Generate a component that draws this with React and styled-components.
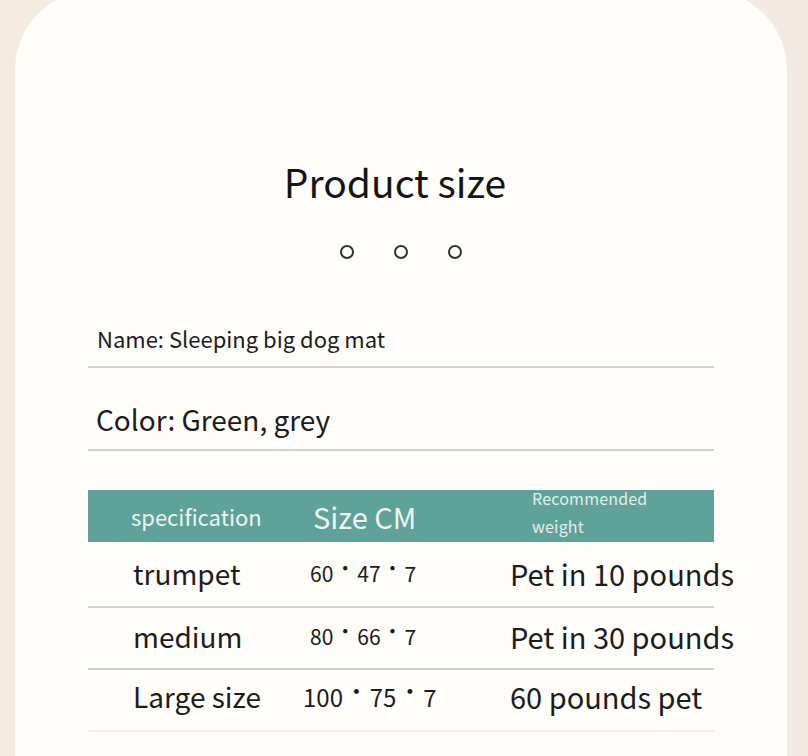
import styled, { createGlobalStyle } from "styled-components";

const GlobalStyle = createGlobalStyle`
  *, *::before, *::after {
    box-sizing: border-box;
  }
  html, body {
    margin: 0;
    padding: 0;
    background: #f6ede3;
    overflow: hidden;
  }
  body {
    font-family: "Noto Sans CJK SC", "Noto Sans", sans-serif;
    color: #1c1c1c;
  }
`;

const Page = styled.div`
  width: 808px;
  height: 756px;
  overflow: hidden;
  background: linear-gradient(90deg, #f6ebdf 0%, #f8efe6 50%, #f3e9e2 100%);
`;

const Card = styled.div`
  margin: -10px 21px 0 15px;
  height: 790px;
  background: #fefdf9;
  border-radius: 80px 80px 0 0;
  display: flex;
  flex-direction: column;
  align-items: center;
`;

const Title = styled.h1`
  margin: 172px 0 0 -12px;
  font-size: 39px;
  line-height: 1;
  font-weight: 400;
  color: #151515;
`;

const Dots = styled.div`
  display: flex;
  gap: 40px;
  margin-top: 44px;
`;

const Ring = styled.span`
  width: 14px;
  height: 14px;
  border: 2px solid #333;
  border-radius: 50%;
`;

const Content = styled.div`
  width: 626px;
  margin-top: 51px;
  display: flex;
  flex-direction: column;
`;

const InfoLine = styled.div`
  padding-left: ${(p) => p.$indent}px;
  padding-top: ${(p) => p.$drop}px;
  height: ${(p) => p.$height}px;
  display: flex;
  align-items: center;
  font-size: ${(p) => p.$size}px;
  border-bottom: 2px solid #cfd0cf;
`;

const Table = styled.div`
  margin-top: 39px;
  display: grid;
  grid-template-columns: 215px 204px minmax(0, 1fr);
`;

const HeadCell = styled.div`
  background: #5fa29a;
  height: 52px;
  display: flex;
  align-items: center;
  padding-left: ${(p) => p.$pad}px;
  color: #eef5f2;
  font-size: ${(p) => p.$size}px;
`;

const Stacked = styled.div`
  display: flex;
  flex-direction: column;
  gap: 10px;
  font-size: 16px;
  line-height: 1.1;
  letter-spacing: 0.2px;
  margin-top: -6px;
  opacity: 0.92;
`;

const Row = styled.div`
  display: contents;
`;

const Cell = styled.div`
  height: ${(p) => p.$height}px;
  display: flex;
  align-items: center;
  padding-left: ${(p) => p.$pad}px;
  padding-bottom: ${(p) => p.$lift}px;
  font-size: ${(p) => p.$size}px;
  white-space: nowrap;
  overflow: visible;
  border-bottom: 2px solid ${(p) => (p.$last ? "#efeeea" : "#cfd0cf")};
`;

const Dot = styled.span`
  font-size: 0.95em;
  margin: 0 2px;
  position: relative;
  top: -0.3em;
`;

const rows = [
  { name: "trumpet", size: ["60", "47", "7"], weight: "Pet in 10 pounds", h: 66, nsize: 21, npad: 7, lift: 2 },
  { name: "medium", size: ["80", "66", "7"], weight: "Pet in 30 pounds", h: 62, nsize: 21, npad: 7, lift: 4 },
  { name: "Large size", size: ["100", "75", "7"], weight: "60 pounds pet", h: 62, nsize: 24, npad: 0, lift: 8 },
];

const Size = ({ parts }) =>
  parts.map((p, i) => (
    <span key={i}>
      {p}
      {i < parts.length - 1 && <Dot>•</Dot>}
    </span>
  ));

export default function App() {
  return (
    <Page>
      <GlobalStyle />
      <Card>
        <Title>Product size</Title>
        <Dots>
          <Ring />
          <Ring />
          <Ring />
        </Dots>
        <Content>
          <InfoLine $indent={9} $drop={0} $height={58} $size={22}>
            Name: Sleeping big dog mat
          </InfoLine>
          <InfoLine $indent={8} $drop={20} $height={83} $size={28}>
            Color: Green, grey
          </InfoLine>
          <Table>
            <HeadCell $pad={43} $size={22}>specification</HeadCell>
            <HeadCell $pad={10} $size={29}>Size CM</HeadCell>
            <HeadCell $pad={25}>
              <Stacked>
                <span>Recommended</span>
                <span>weight</span>
              </Stacked>
            </HeadCell>
            {rows.map((r, i) => (
              <Row key={r.name}>
                <Cell $height={r.h} $pad={45} $size={28} $lift={r.lift} $last={i === 2}>
                  {r.name}
                </Cell>
                <Cell $height={r.h} $pad={r.npad} $size={r.nsize} $lift={r.lift} $last={i === 2}>
                  <Size parts={r.size} />
                </Cell>
                <Cell $height={r.h} $pad={3} $size={29} $lift={r.lift} $last={i === 2}>
                  {r.weight}
                </Cell>
              </Row>
            ))}
          </Table>
        </Content>
      </Card>
    </Page>
  );
}
